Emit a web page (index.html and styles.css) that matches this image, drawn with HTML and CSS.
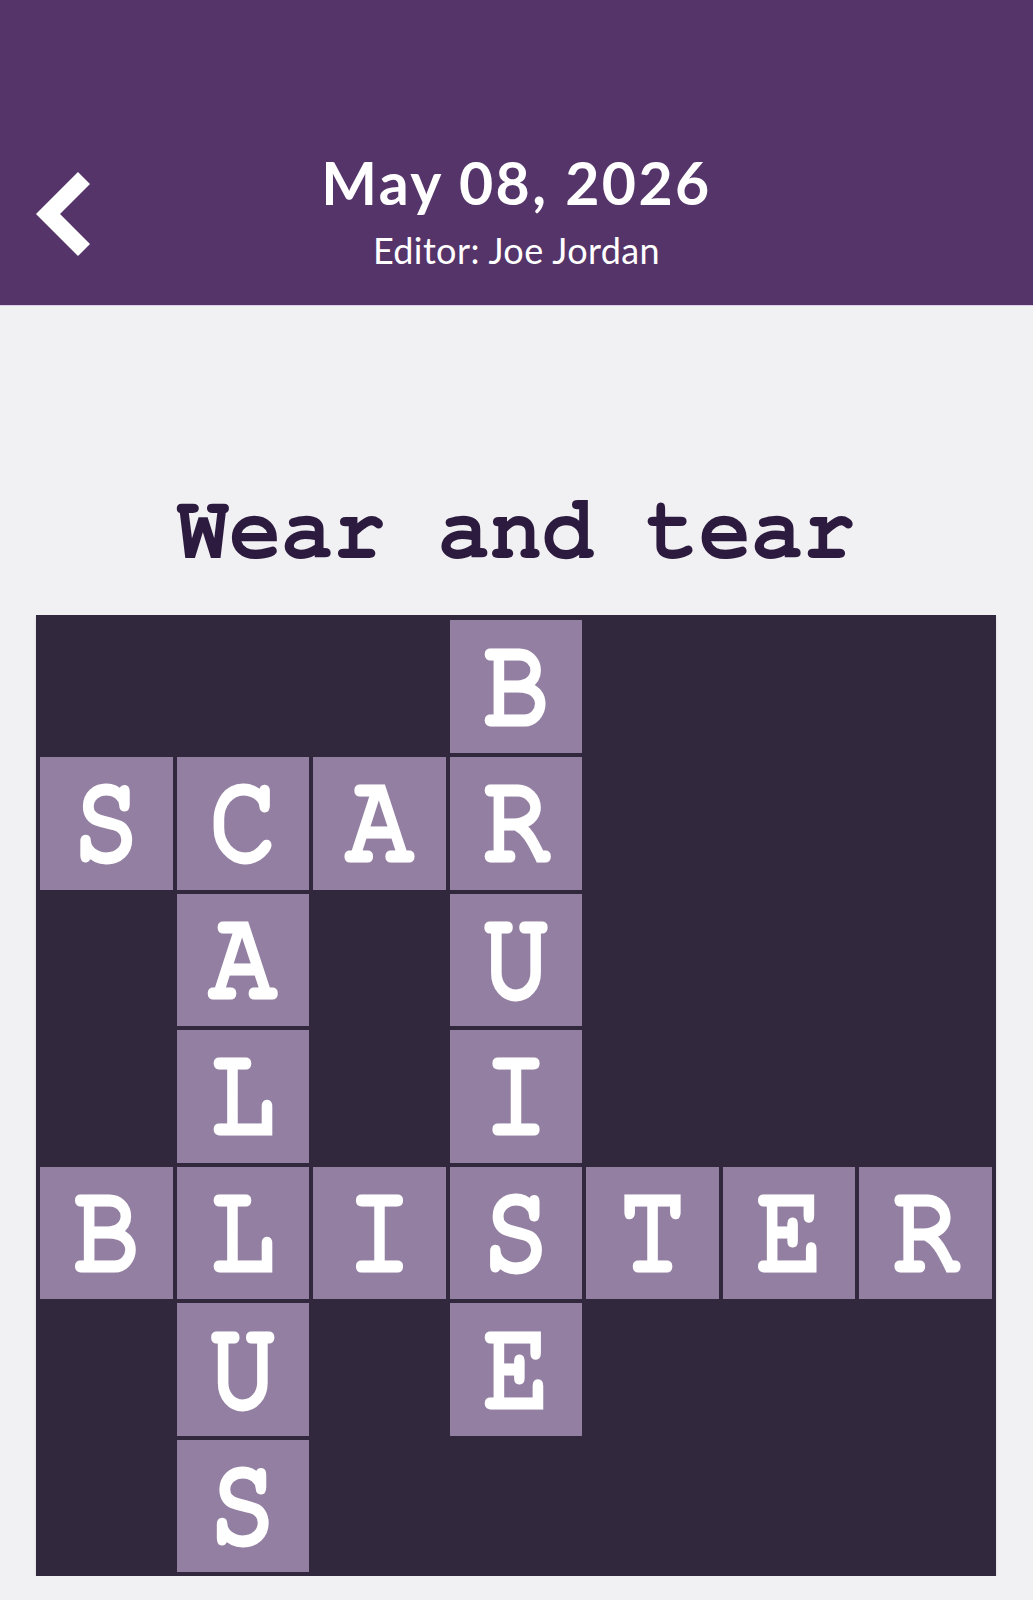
FILE: index.html
```
<!DOCTYPE html>
<html lang="en">
<head>
<meta charset="utf-8">
<title>Wear and tear</title>
<link rel="stylesheet" href="styles.css">
</head>
<body>
<header class="topbar">
  <button class="back" aria-label="Back">
    <svg width="60" height="100" viewBox="0 0 60 100"><polyline points="54,14 18,50 54,86" fill="none" stroke="#ffffff" stroke-width="17" stroke-linejoin="miter" stroke-linecap="butt"/></svg>
  </button>
  <div class="heading">
    <div class="date">May 08, 2026</div>
    <div class="editor">Editor: Joe Jordan</div>
  </div>
  <div class="spacer"></div>
</header>
<main class="content">
  <h1 class="puzzle-title"><span>Wear and tear</span></h1>
  <div class="board">
    <div class="cell"></div><div class="cell"></div><div class="cell"></div><div class="cell on"><span>B</span></div><div class="cell"></div><div class="cell"></div><div class="cell"></div>
    <div class="cell on"><span>S</span></div><div class="cell on"><span>C</span></div><div class="cell on"><span>A</span></div><div class="cell on"><span>R</span></div><div class="cell"></div><div class="cell"></div><div class="cell"></div>
    <div class="cell"></div><div class="cell on"><span>A</span></div><div class="cell"></div><div class="cell on"><span>U</span></div><div class="cell"></div><div class="cell"></div><div class="cell"></div>
    <div class="cell"></div><div class="cell on"><span>L</span></div><div class="cell"></div><div class="cell on"><span>I</span></div><div class="cell"></div><div class="cell"></div><div class="cell"></div>
    <div class="cell on"><span>B</span></div><div class="cell on"><span>L</span></div><div class="cell on"><span>I</span></div><div class="cell on"><span>S</span></div><div class="cell on"><span>T</span></div><div class="cell on"><span>E</span></div><div class="cell on"><span>R</span></div>
    <div class="cell"></div><div class="cell on"><span>U</span></div><div class="cell"></div><div class="cell on"><span>E</span></div><div class="cell"></div><div class="cell"></div><div class="cell"></div>
    <div class="cell"></div><div class="cell on"><span>S</span></div><div class="cell"></div><div class="cell"></div><div class="cell"></div><div class="cell"></div><div class="cell"></div>
  </div>
</main>
</body>
</html>
```

FILE: styles.css
```
html, body {
  margin: 0;
  padding: 0;
}

body {
  background: #f1f1f3;
  font-family: "Lato", "Liberation Sans", sans-serif;
}

.topbar {
  box-sizing: border-box;
  height: 306px;
  background: #55346a;
  border-bottom: 1px solid #dccdea;
  display: grid;
  grid-template-columns: 1fr auto 1fr;
  align-items: start;
  padding: 148px 0 0 0;
}

.back {
  justify-self: start;
  margin: 16px 0 0 30px;
  padding: 0;
  border: 0;
  background: none;
  width: 60px;
  height: 100px;
  display: block;
}

.back svg {
  display: block;
}

.heading {
  text-align: center;
  color: #ffffff;
}

.date {
  font-size: 59px;
  font-weight: 700;
  line-height: 1.2;
  letter-spacing: 2.4px;
}

.editor {
  font-size: 36px;
  font-weight: 400;
  line-height: 1.2;
  letter-spacing: 0.4px;
  margin-top: 10px;
}

.content {
  padding: 0 37px 0 36px;
}

.puzzle-title {
  margin: 174px 0 0 0;
  font-family: "FreeMono", "Liberation Mono", monospace;
  font-weight: 700;
  font-size: 87px;
  line-height: 1.2;
  color: #2c1b3e;
  text-align: center;
}

.puzzle-title span {
  display: inline-block;
  transform: scaleY(1.08);
  transform-origin: 50% 78%;
}

.board {
  margin-top: 31px;
  background: #32283e;
  padding: 5px 4px 4px 4px;
  display: grid;
  grid-template-columns: repeat(7, 1fr);
  gap: 4px;
  box-shadow: 0 2px 3px rgba(60, 40, 90, 0.12);
}

.cell {
  aspect-ratio: 1 / 1;
  display: flex;
  align-items: center;
  justify-content: center;
  box-sizing: border-box;
  padding-bottom: 4px;
}

.cell.on {
  background: #937fa1;
}

.cell span {
  display: block;
  font-family: "FreeMono", "Liberation Mono", monospace;
  font-weight: 400;
  font-size: 110px;
  line-height: 1;
  color: #ffffff;
  -webkit-text-stroke: 6px #ffffff;
  paint-order: stroke fill;
  transform: scaleY(1.14);
}
```
